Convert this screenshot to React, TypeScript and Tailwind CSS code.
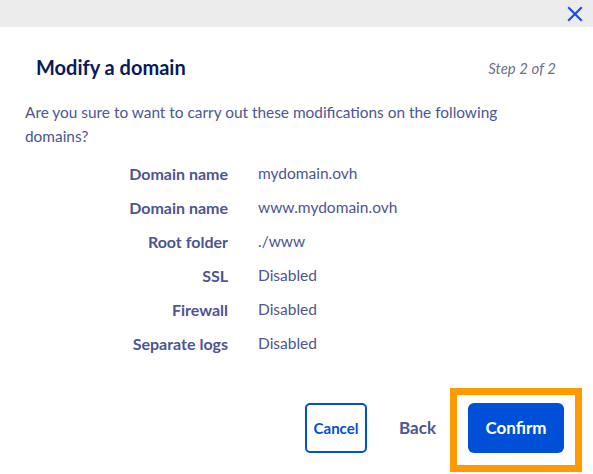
import React from "react";

const rows: [string, string][] = [
  ["Domain name", "mydomain.ovh"],
  ["Domain name", "www.mydomain.ovh"],
  ["Root folder", "./www"],
  ["SSL", "Disabled"],
  ["Firewall", "Disabled"],
  ["Separate logs", "Disabled"],
];

export default function App() {
  return (
    <div
      className="w-[593px] h-[474px] bg-white flex flex-col overflow-hidden"
      style={{ fontFamily: "Lato, 'Open Sans', sans-serif" }}
    >
      <div className="h-[27px] bg-[#ebeceb] flex items-center justify-end pr-[10px] shrink-0">
        <svg width="16" height="16" viewBox="0 0 16 16" className="text-[#1f4fe0]">
          <path d="M2 2 L14 14 M14 2 L2 14" stroke="currentColor" strokeWidth="2.2" strokeLinecap="square" />
        </svg>
      </div>
      <div className="flex items-center justify-between pl-[36px] pr-[37px] pt-[27px]">
        <h1 className="text-[20px] font-bold text-[#0b1a5c] leading-[26px]">Modify a domain</h1>
        <span className="text-[15px] italic text-[#6e6f89] leading-[26px] translate-y-[1px]">Step 2 of 2</span>
      </div>
      <p className="pl-[25px] pr-[80px] pt-[20px] text-[15.4px] leading-[24px] text-[#4d5593]">
        Are you sure to want to carry out these modifications on the following domains?
      </p>
      <div className="grid grid-cols-[203px_1fr] gap-x-[30px] pl-[25px] pt-[9px]">
        {rows.map(([k, v], i) => (
          <React.Fragment key={i}>
            <div className="h-[34px] flex items-center justify-end text-[16px] font-bold text-[#4d5593]">{k}</div>
            <div className="h-[34px] flex items-center text-[15.5px] text-[#4d5593]">{v}</div>
          </React.Fragment>
        ))}
      </div>
      <div className="flex items-start justify-end pr-[11px] mt-auto pb-[2px]">
        <button className="mt-[15px] h-[50px] w-[62px] border-2 border-[#0050d7] rounded-[5px] text-[15px] font-bold text-[#0050d7]">
          Cancel
        </button>
        <button className="mt-[15px] h-[50px] ml-[32px] mr-[14px] text-[17px] font-bold text-[#4d5593]">Back</button>
        <div className="border-[7px] border-[#ff9a00] px-[11px] pt-[8px] pb-[12px]">
          <button className="h-[50px] w-[96px] bg-[#0050d7] rounded-[6px] text-[17px] font-bold text-white">
            Confirm
          </button>
        </div>
      </div>
    </div>
  );
}
